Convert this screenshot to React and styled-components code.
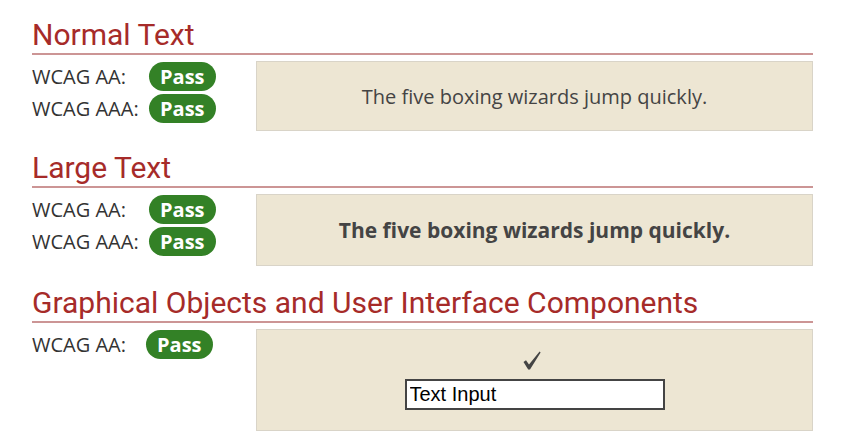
import styled, { createGlobalStyle } from "styled-components";

const GlobalStyle = createGlobalStyle`
  body {
    margin: 0;
    background: #ffffff;
    font-family: "Open Sans", "Liberation Sans", sans-serif;
  }
`;

const Page = styled.main`
  width: 781px;
  padding: 17px 0 0 32px;
`;

const Section = styled.section`
  margin-bottom: 19px;
`;

const Heading = styled.h2`
  margin: 0 0 6px;
  font-family: Roboto, "Liberation Sans", sans-serif;
  font-weight: 400;
  font-size: 30px;
  line-height: 36px;
  color: #a62b29;
  border-bottom: 2px solid #cc9595;
`;

const Body = styled.div`
  display: flex;
  align-items: flex-start;
`;

const Results = styled.div`
  width: 224px;
  flex-shrink: 0;
  margin-top: -1px;
`;

const Row = styled.div`
  display: flex;
  align-items: center;
  height: 32px;
`;

const Label = styled.span`
  width: ${(p) => p.$width}px;
  font-size: 20px;
  color: #333333;
`;

const Badge = styled.span`
  display: inline-flex;
  align-items: center;
  height: 29px;
  padding: 0 11px;
  border-radius: 15px;
  background: #338126;
  color: #ffffff;
  font-weight: 700;
  font-size: 20px;
`;

const Sample = styled.div`
  flex: 1;
  box-sizing: border-box;
  height: ${(p) => p.$height}px;
  display: flex;
  flex-direction: column;
  align-items: center;
  justify-content: center;
  background: #ede6d3;
  border: 1px solid #d9d4c8;
  color: #444444;
  font-size: ${(p) => (p.$large ? "21px" : "20px")};
  font-weight: ${(p) => (p.$large ? 700 : 400)};
`;

const Check = styled.svg`
  display: block;
  width: 18px;
  height: 19px;
  margin: 0 6px 9px 0;
`;

const TextInput = styled.input`
  box-sizing: border-box;
  width: 260px;
  height: 31px;
  padding: 0 3px;
  border: 2px solid #444444;
  background: #ffffff;
  font-family: "Liberation Sans", Arial, sans-serif;
  font-size: 20px;
  color: #000000;
  outline: none;
`;

const ResultList = ({ rows, labelWidth }) => (
  <Results>
    {rows.map((r) => (
      <Row key={r}>
        <Label $width={labelWidth}>{r}:</Label>
        <Badge>Pass</Badge>
      </Row>
    ))}
  </Results>
);

export default function App() {
  return (
    <>
      <GlobalStyle />
      <Page>
        <Section>
          <Heading>Normal Text</Heading>
          <Body>
            <ResultList rows={["WCAG AA", "WCAG AAA"]} labelWidth={117} />
            <Sample $height={70}>The five boxing wizards jump quickly.</Sample>
          </Body>
        </Section>
        <Section>
          <Heading>Large Text</Heading>
          <Body>
            <ResultList rows={["WCAG AA", "WCAG AAA"]} labelWidth={117} />
            <Sample $height={72} $large>
              The five boxing wizards jump quickly.
            </Sample>
          </Body>
        </Section>
        <Section>
          <Heading>Graphical Objects and User Interface Components</Heading>
          <Body>
            <ResultList rows={["WCAG AA"]} labelWidth={114} />
            <Sample $height={102}>
              <Check viewBox="0 0 18 19" aria-hidden="true">
                <path
                  d="M0.5 11 L3 9.3 L6 13.6 L16.6 0.6 L17.6 1.4 L7 18.4 L5.2 18.4 Z"
                  fill="#444444"
                />
              </Check>
              <TextInput defaultValue="Text Input" readOnly />
            </Sample>
          </Body>
        </Section>
      </Page>
    </>
  );
}
